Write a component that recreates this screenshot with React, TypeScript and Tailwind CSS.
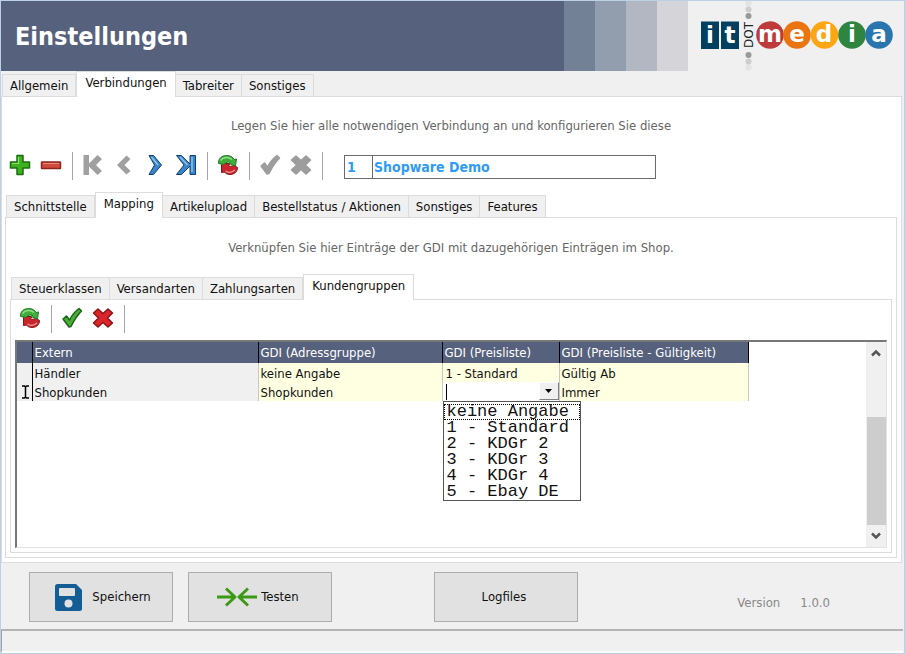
import { ReactNode } from "react"
import clsx from "clsx"

const connectionTabs = ["Allgemein", "Verbindungen", "Tabreiter", "Sonstiges"]
const detailTabs = [
  "Schnittstelle",
  "Mapping",
  "Artikelupload",
  "Bestellstatus / Aktionen",
  "Sonstiges",
  "Features",
]
const mappingTabs = ["Steuerklassen", "Versandarten", "Zahlungsarten", "Kundengruppen"]
const priceLists = ["keine Angabe", "1 - Standard", "2 - KDGr 2", "3 - KDGr 3", "4 - KDGr 4", "5 - Ebay DE"]

type TabsProps = {
  label: string
  items: string[]
  active: string
}

const Tabs = ({ label, items, active }: TabsProps) => {
  return (
    <div role="tablist" aria-label={label} className="relative z-10 -mb-px flex items-end pl-px">
      {items.map((item) => {
        const selected = item === active
        return (
          <button
            key={item}
            type="button"
            role="tab"
            aria-selected={selected}
            className={clsx(
              "border-t border-r border-[#dcdcdc] whitespace-nowrap first:border-l",
              selected
                ? "h-[26px] border-l bg-white px-2 pb-1"
                : "h-[23px] border-b bg-[#f0f0f0] px-[7px]"
            )}
          >
            {item}
          </button>
        )
      })}
    </div>
  )
}

type ToolButtonProps = {
  label: string
  disabled?: boolean
  children: ReactNode
}

const ToolButton = ({ label, disabled, children }: ToolButtonProps) => {
  return (
    <button
      type="button"
      aria-label={label}
      disabled={disabled}
      className="flex h-7 w-[31px] items-center justify-center pr-px pb-[2px]"
    >
      <svg viewBox="0 0 22 22" className="size-[22px]">
        {children}
      </svg>
    </button>
  )
}

const Separator = () => (
  <div className="flex h-7 w-[11px] justify-center">
    <div className="w-px bg-[#a6a6a6]" />
  </div>
)

const RefreshIcon = () => (
  <>
    <path
      d="M4.500 9.500 H13 L11.500 12 C13 12.500 15 12.500 16.500 11 L20.500 13.500 C20.500 18 17 20.500 13 20.500 C10.500 20.500 8.500 19.500 7.500 18 L4.500 18.500 Z"
      fill="#c9252c"
      stroke="#8a1318"
      strokeLinejoin="round"
    />
    <path d="M8.500 17 C11 19 15 18.500 18 16" fill="none" stroke="#ee9a98" strokeWidth="1.500" />
    <path
      d="M1.500 9.500 C1 5 4.500 1.500 9.500 1.500 C13 1.500 16 3 17 5.500 L19.500 5 L18.500 12 L12 9.500 L13.500 8.500 C11.500 7.500 8.500 8 7 10.500 Z"
      fill="#3fae3a"
      stroke="#237c27"
      strokeLinejoin="round"
    />
    <path d="M3.500 6.500 C6 3 11.500 2.500 15 5.500" fill="none" stroke="#93dd88" strokeWidth="1.500" />
  </>
)

const CheckIcon = ({ fill, stroke }: { fill: string; stroke: string }) => (
  <path
    d="M2 12 L5.500 9 L8.500 13 C11 8 14.500 4 18 1.500 L20.500 4 C16 8.500 13 13.500 10 19.500 L8 20 Z"
    fill={fill}
    stroke={stroke}
    strokeWidth="1.500"
    strokeLinejoin="round"
  />
)

const CrossIcon = ({ fill, stroke }: { fill: string; stroke: string }) => (
  <path
    d="M6 2 L11 6.500 L16 2 L20.500 6 L15.500 11 L20.500 16 L16 20 L11 15.500 L6 20 L1.500 16 L6.500 11 L1.500 6 Z"
    fill={fill}
    stroke={stroke}
    strokeWidth="1.500"
    strokeLinejoin="round"
  />
)

const Logo = () => (
  <svg viewBox="0 0 192 70" className="h-[70px] w-[192px]" role="img" aria-label="it dot media">
    <g fontFamily="'DejaVu Sans', sans-serif" fontWeight="bold" fontSize="23" fill="#fff" textAnchor="middle">
      <rect x="0" y="20.500" width="18" height="27.500" fill="#033f5f" />
      <rect x="20" y="20.500" width="18" height="27.500" fill="#033f5f" />
      <text x="9" y="42">i</text>
      <text x="29" y="42">t</text>
      <circle cx="69" cy="34" r="13.800" fill="#bf3a3a" />
      <circle cx="96" cy="34" r="13.800" fill="#ea740f" />
      <circle cx="123.500" cy="34" r="13.800" fill="#fda613" />
      <circle cx="151" cy="34" r="13.800" fill="#2f8440" />
      <circle cx="178" cy="34" r="13.800" fill="#2976ae" />
      <text x="69" y="41">m</text>
      <text x="96" y="41">e</text>
      <text x="123" y="41">d</text>
      <text x="151" y="41">i</text>
      <text x="178" y="41">a</text>
    </g>
    <g fill="#999">
      <circle cx="47.500" cy="2.500" r="3" opacity="0.15" />
      <circle cx="47.500" cy="8.500" r="3" opacity="0.4" />
      <circle cx="47.500" cy="15" r="3" />
      <circle cx="47.500" cy="54" r="3" />
      <circle cx="47.500" cy="60.500" r="3" opacity="0.4" />
      <circle cx="47.500" cy="66.500" r="3" opacity="0.15" />
    </g>
    <text
      transform="translate(52 34) rotate(-90)"
      textAnchor="middle"
      fontFamily="'DejaVu Sans', sans-serif"
      fontSize="12"
      fill="#222"
    >
      DOT
    </text>
  </svg>
)

const Header = () => (
  <header className="flex h-[70px] bg-[#f0f0f0]">
    <div className="flex flex-1 items-center bg-[#56617d] pt-[2px] pl-[14px]">
      <h1 className="text-[25px] leading-8 font-bold text-white">Einstellungen</h1>
    </div>
    <div className="w-[31px] bg-[#728195]" />
    <div className="w-[31px] bg-[#929ead]" />
    <div className="w-[31px] bg-[#b3b7c2]" />
    <div className="w-[31px] bg-[#d5d5d9]" />
    <div className="flex pr-[11px] pl-[13px]">
      <Logo />
    </div>
  </header>
)

const ConnectionToolbar = () => (
  <div className="flex items-center">
    <ToolButton label="Hinzufügen">
      <path d="M8 1.500 H14 V8 H20.500 V14 H14 V20.500 H8 V14 H1.500 V8 H8 Z" fill="#3eb21c" stroke="#1d6e10" strokeWidth="1.500" strokeLinejoin="round" />
      <path d="M9.500 3 V9.500 H3" fill="none" stroke="#8fe070" strokeWidth="1.200" />
    </ToolButton>
    <ToolButton label="Löschen">
      <rect x="1.500" y="8" width="19" height="6.500" rx="0.500" fill="#d24a3e" stroke="#8c2620" strokeWidth="1.500" />
      <path d="M3 9.500 H19" stroke="#ea8a7e" />
    </ToolButton>
    <Separator />
    <ToolButton label="Erster Datensatz" disabled>
      <path d="M1.500 1 H7 V9.500 L15.500 1 L20 5 L14 11 L20 17 L15.500 21 L7 12.500 V21 H1.500 Z" fill="#a0a0a0" />
    </ToolButton>
    <ToolButton label="Vorheriger Datensatz" disabled>
      <path d="M13.500 1.500 L17.500 5 L11.500 11 L17.500 17 L13.500 20.500 L4 11 Z" fill="#a0a0a0" />
    </ToolButton>
    <ToolButton label="Nächster Datensatz">
      <path d="M5 1.500 H9.500 L17.500 11 L9.500 20.500 H5 L10.500 11 Z" fill="#3a84c8" stroke="#123f72" strokeLinejoin="round" />
      <path d="M7.500 3 L14 11" stroke="#8cc4ee" strokeWidth="1.500" />
    </ToolButton>
    <ToolButton label="Letzter Datensatz">
      <path d="M1.500 1.500 H6.500 L15 10 V1.500 H20.500 V20.500 H15 V12 L6.500 20.500 H1.500 L9 11 Z" fill="#3a84c8" stroke="#123f72" strokeLinejoin="round" />
      <path d="M5 3 L12.500 11 M17 3 V18" stroke="#8cc4ee" strokeWidth="1.500" />
    </ToolButton>
    <Separator />
    <ToolButton label="Aktualisieren">
      <RefreshIcon />
    </ToolButton>
    <Separator />
    <ToolButton label="Übernehmen" disabled>
      <CheckIcon fill="#9d9d9d" stroke="#9d9d9d" />
    </ToolButton>
    <ToolButton label="Abbrechen" disabled>
      <CrossIcon fill="#9d9d9d" stroke="#9d9d9d" />
    </ToolButton>
    <Separator />
    <div className="mt-[2px] ml-4 flex h-6 w-[312px] border border-[#6b6b6b] text-sm font-bold text-[#2f9bf4]">
      <input
        aria-label="Nummer"
        defaultValue="1"
        className="w-7 border-r border-[#6b6b6b] px-[2px] outline-none"
      />
      <input aria-label="Bezeichnung" defaultValue="Shopware Demo" className="min-w-0 flex-1 px-px outline-none" />
    </div>
  </div>
)

const MappingToolbar = () => (
  <div className="flex items-center pt-[5px]">
    <ToolButton label="Zuordnungen aktualisieren">
      <RefreshIcon />
    </ToolButton>
    <Separator />
    <ToolButton label="Zuordnung übernehmen">
      <CheckIcon fill="#4aad35" stroke="#1c641c" />
    </ToolButton>
    <ToolButton label="Zuordnung abbrechen">
      <CrossIcon fill="#d8262b" stroke="#8c1416" />
    </ToolButton>
    <Separator />
  </div>
)

const PriceListSelect = () => (
  <div className="relative h-[19px] bg-white">
    <select
      aria-label="GDI (Preisliste)"
      defaultValue=""
      className="block h-full w-full appearance-none pl-1 outline-none"
    >
      <option value="" />
      {priceLists.map((name) => (
        <option key={name}>{name}</option>
      ))}
    </select>
    <span className="pointer-events-none absolute top-[2px] left-[3px] h-4 w-px bg-black" />
    <span className="pointer-events-none absolute top-0 right-0 flex h-[18px] w-5 items-center justify-center border border-t-white border-r-[#808080] border-b-[#808080] border-l-white bg-[#f0f0f0]">
      <svg viewBox="0 0 7 4" className="h-1 w-[7px]">
        <path d="M0 0 H7 L3.500 4 Z" fill="#000" />
      </svg>
    </span>
    <ul
      role="listbox"
      aria-label="Preislisten"
      className="absolute top-full left-0 z-20 w-[138px] border border-[#555] bg-white pt-[2px] font-['Liberation_Mono',monospace] text-[17px] leading-4"
    >
      {priceLists.map((name, i) => (
        <li
          key={name}
          role="option"
          aria-selected={i === 0}
          className={clsx("h-4 px-[3px] whitespace-nowrap", i === 0 && "outline outline-dotted -outline-offset-1 outline-black")}
        >
          {name}
        </li>
      ))}
    </ul>
  </div>
)

const MappingTable = () => (
  <table className="w-[731px] table-fixed border-collapse self-start text-left">
    <colgroup>
      <col className="w-[15px]" />
      <col className="w-[226px]" />
      <col className="w-[184px]" />
      <col className="w-[117px]" />
      <col className="w-[189px]" />
    </colgroup>
    <thead>
      <tr className="h-[21px] bg-[#56617d] text-white">
        <th className="border-r border-black" />
        <th className="border-r border-black px-[2px] pt-px font-normal">Extern</th>
        <th className="border-r border-black px-[2px] pt-px font-normal">GDI (Adressgruppe)</th>
        <th className="border-r border-black px-[2px] pt-px font-normal">GDI (Preisliste)</th>
        <th className="border-r border-black px-[2px] pt-px font-normal">GDI (Preisliste - Gültigkeit)</th>
      </tr>
    </thead>
    <tbody>
      <tr className="h-[19px] bg-[#ffffe1]">
        <td className="border-r border-black bg-[#f0f0f0]" />
        <td className="border-r border-[#c8c8c8] bg-[#f0f0f0] px-[2px] pt-[3px]">Händler</td>
        <td className="border-r border-[#c8c8c8] px-[2px] pt-[3px]">keine Angabe</td>
        <td className="border-r border-[#c8c8c8] px-[3px] pt-[3px]">1 - Standard</td>
        <td className="border-r border-[#c8c8c8] px-[2px] pt-[3px]">Gültig Ab</td>
      </tr>
      <tr className="h-[19px] bg-[#ffffe1]">
        <td className="border-r border-black bg-[#f0f0f0]">
          <svg viewBox="0 0 9 14" className="ml-1 h-[14px] w-[9px]">
            <path d="M1 1 H3.500 L4.500 2 L5.500 1 H8 M4.500 2 V12 M1 13 H3.500 L4.500 12 L5.500 13 H8" fill="none" stroke="#000" strokeWidth="1.500" />
          </svg>
        </td>
        <td className="border-r border-[#c8c8c8] bg-[#f0f0f0] px-[2px] pt-[3px]">Shopkunden</td>
        <td className="border-r border-[#c8c8c8] px-[2px] pt-[3px]">Shopkunden</td>
        <td className="border-r border-[#c8c8c8] p-0">
          <PriceListSelect />
        </td>
        <td className="border-r border-[#c8c8c8] px-[2px] pt-[3px]">Immer</td>
      </tr>
    </tbody>
  </table>
)

const Scrollbar = () => (
  <div className="flex w-5 flex-col items-center bg-[#f0f0f0]" aria-hidden="true">
    <svg viewBox="0 0 10 8" className="mt-[7px] h-2 w-[10px]">
      <path d="M1 6.500 L5 2.500 L9 6.500" fill="none" stroke="#555" strokeWidth="2.500" />
    </svg>
    <div className="flex-[60]" />
    <div className="w-[19px] flex-[108] bg-[#cdcdcd]" />
    <svg viewBox="0 0 10 8" className="my-[7px] h-2 w-[10px]">
      <path d="M1 1.500 L5 5.500 L9 1.500" fill="none" stroke="#555" strokeWidth="2.500" />
    </svg>
  </div>
)

const Footer = () => (
  <footer className="flex items-center px-7 pt-[9px] pb-[7px]">
    <button
      type="button"
      className="flex h-[50px] w-36 items-center justify-center gap-[10px] border border-[#adadad] bg-[#e1e1e1] pl-1"
    >
      <svg viewBox="0 0 27 27" className="size-[27px]">
        <path d="M2.500 0 H21 L27 6 V24.500 Q27 27 24.500 27 H2.500 Q0 27 0 24.500 V2.500 Q0 0 2.500 0 Z" fill="#145d94" />
        <rect x="4" y="4" width="16" height="8" rx="1" fill="#e1e1e1" />
        <circle cx="13.500" cy="19.500" r="4" fill="#e1e1e1" />
      </svg>
      Speichern
    </button>
    <button
      type="button"
      className="ml-[15px] flex h-[50px] w-36 items-center justify-center gap-1 border border-[#adadad] bg-[#e1e1e1] pr-1"
    >
      <svg viewBox="0 0 40 20" className="h-5 w-10">
        <path
          d="M0 10 H17 M9 1.500 L18 10 L9 18.500 M40 10 H23 M31 1.500 L22 10 L31 18.500"
          fill="none"
          stroke="#3a9a14"
          strokeWidth="3"
          strokeLinejoin="round"
        />
      </svg>
      Testen
    </button>
    <button type="button" className="ml-[102px] h-[50px] w-36 border border-[#adadad] bg-[#e1e1e1] pr-1">
      Logfiles
    </button>
    <div className="ml-auto flex gap-5 pt-3 pr-[46px] text-[#888]">
      <span>Version</span>
      <span>1.0.0</span>
    </div>
  </footer>
)

const App = () => {
  return (
    <div className="flex min-h-screen flex-col border border-[#bcd0e6] bg-[#f0f0f0] font-['DejaVu_Sans_Condensed','DejaVu_Sans',sans-serif] text-[13px] leading-4 text-[#111]">
      <Header />
      <main className="flex flex-1 flex-col pr-[2px]">
        <Tabs label="Einstellungen" items={connectionTabs} active="Verbindungen" />
        <section className="flex flex-1 flex-col border border-[#dcdcdc] bg-white pr-1 pb-1 pl-[3px]">
          <p className="pt-[21px] pb-[18px] text-center text-[#666]">
            Legen Sie hier alle notwendigen Verbindung an und konfigurieren Sie diese
          </p>
          <ConnectionToolbar />
          <div className="h-3" />
          <Tabs label="Verbindung" items={detailTabs} active="Mapping" />
          <section className="flex flex-1 flex-col border border-[#dcdcdc] pr-1 pb-1 pl-1">
            <p className="pt-[22px] pb-[18px] text-center text-[#666]">
              Verknüpfen Sie hier Einträge der GDI mit dazugehörigen Einträgen im Shop.
            </p>
            <Tabs label="Mapping" items={mappingTabs} active="Kundengruppen" />
            <section className="flex flex-1 flex-col border border-[#dcdcdc] p-1 pt-0">
              <MappingToolbar />
              <div className="mt-[7px] flex flex-1 justify-between border-t-2 border-r border-b border-l-2 border-t-[#777] border-r-[#e3e3e3] border-b-[#e3e3e3] border-l-[#777]">
                <MappingTable />
                <Scrollbar />
              </div>
            </section>
          </section>
        </section>
      </main>
      <Footer />
      <div className="mr-px h-6 border-t-2 border-b-2 border-l border-t-[#b4b4b4] border-b-white border-l-[#a0a0a0]" />
    </div>
  )
}

export default App
